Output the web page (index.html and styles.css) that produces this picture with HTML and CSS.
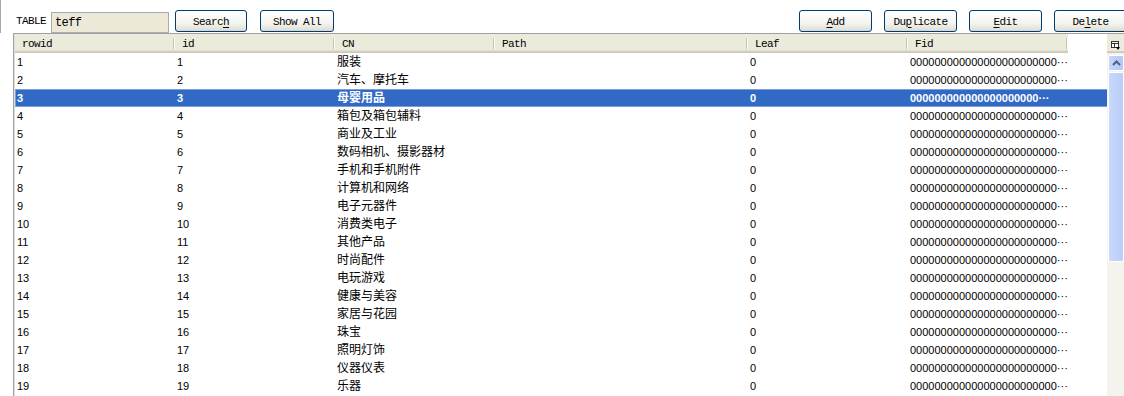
FILE: index.html
```html
<!DOCTYPE html>
<html lang="zh-CN">
<head>
  <meta charset="UTF-8">
  <title>TABLE teff</title>
  <link rel="stylesheet" href="styles.css">
</head>
<body>

  <!-- Toolbar -->
  <div class="toolbar">
    <span class="label">TABLE</span>
    <input class="table-name" type="text" value="teff">
    <button class="btn btn-search">Searc<u>h</u></button>
    <button class="btn btn-showall">Show All</button>
    <div class="spacer"></div>
    <div class="btn-group">
      <button class="btn"><u>A</u>dd</button>
      <button class="btn">Du<u>p</u>licate</button>
      <button class="btn"><u>E</u>dit</button>
      <button class="btn">De<u>l</u>ete</button>
    </div>
  </div>

  <!-- Grid -->
  <div class="grid">
    <div class="grid-body">
      <table class="data">
        <colgroup>
          <col style="width:160px">
          <col style="width:160px">
          <col style="width:160px">
          <col style="width:253px">
          <col style="width:160px">
          <col style="width:160px">
          <col>
        </colgroup>
        <thead>
          <tr>
            <th>rowid</th>
            <th>id</th>
            <th>CN</th>
            <th>Path</th>
            <th>Leaf</th>
            <th>Fid</th>
            <th class="blank"></th>
          </tr>
        </thead>
        <tbody id="rows"></tbody>
      </table>
    </div>

    <div class="vscroll">
      <div class="chooser">
        <svg width="9" height="9" viewBox="0 0 9 9">
          <rect x="0.5" y="0.5" width="7" height="6" fill="#fff" stroke="#333"/>
          <line x1="0.5" y1="2.5" x2="7.5" y2="2.5" stroke="#333"/>
          <line x1="3.5" y1="2.5" x2="3.5" y2="6.5" stroke="#333"/>
          <path d="M5 6 L9 6 L7 9 Z" fill="#000"/>
        </svg>
      </div>
      <div class="scroll-track">
        <div class="arrow-up">
          <svg width="9" height="6" viewBox="0 0 9 6">
            <path d="M1 5 L4.5 1.5 L8 5" fill="none" stroke="#4d6185" stroke-width="2"/>
          </svg>
        </div>
        <div class="thumb"></div>
      </div>
    </div>
  </div>

  <script>
    const names = [
      "服装", "汽车、摩托车", "母婴用品", "箱包及箱包辅料", "商业及工业",
      "数码相机、摄影器材", "手机和手机附件", "计算机和网络", "电子元器件",
      "消费类电子", "其他产品", "时尚配件", "电玩游戏", "健康与美容",
      "家居与花园", "珠宝", "照明灯饰", "仪器仪表", "乐器"
    ];
    const selected = 3;

    document.getElementById("rows").innerHTML = names
      .map((cn, i) => {
        const n = i + 1;
        const isSel = n === selected;
        const fid = "0".repeat(isSel ? 21 : 24) + "···";
        return `
        <tr class="${isSel ? "selected" : ""}">
          <td>${n}</td>
          <td>${n}</td>
          <td class="cn">${cn}</td>
          <td></td>
          <td>0</td>
          <td>${fid}</td>
          <td class="blank"></td>
        </tr>`;
      })
      .join("");
  </script>

</body>
</html>
```

FILE: styles.css
```css
/* General Reset */
* {
  margin: 0;
  padding: 0;
  box-sizing: border-box;
}

body {
  font-family: 'Liberation Sans', 'Noto Sans CJK SC', sans-serif;
  background-color: #fff;
  color: #000;
  width: 1124px;
  height: 396px;
  overflow: hidden;
}

/* Toolbar */
.toolbar {
  height: 33px;
  display: flex;
  align-items: flex-start;
  border-left: 1px solid #a7a6aa;
  padding-left: 15px;
}

.label,
.btn,
.data th {
  font-family: 'Liberation Mono', 'Noto Sans CJK SC', monospace;
  font-size: 11px;
  letter-spacing: -0.6px;
}

.label {
  margin-top: 15px;
  line-height: 12px;
}

.table-name {
  margin: 12px 0 0 5px;
  width: 118px;
  height: 21px;
  border: 1px solid #a5acb2;
  background-color: #ece9d8;
  padding: 0 3px;
  font-family: 'Liberation Mono', monospace;
  font-size: 12px;
  letter-spacing: -0.6px;
  color: #000;
}

.btn {
  margin-top: 10px;
  width: 73px;
  height: 22px;
  border: 1px solid #003c74;
  border-radius: 3px;
  background: linear-gradient(#ffffff, #f4f4f0 60%, #e3e1d8 92%, #d6d0c5);
  color: #000;
  padding-top: 1px;
}

.btn u {
  text-decoration-thickness: 1px;
  text-underline-offset: 2px;
}

.btn-search {
  margin-left: 6px;
  width: 72px;
}

.btn-showall {
  margin-left: 13px;
  width: 74px;
}

.spacer {
  flex: 1;
}

.btn-group {
  display: flex;
  gap: 12px;
  margin-right: -3px;
  flex-shrink: 0;
}

/* Grid */
.grid {
  display: flex;
  margin-left: 13px;
  border-left: 1px solid #a0a0a0;
  border-top: 1px solid #a0a0a0;
  height: 363px;
}

.grid-body {
  width: 1097px;
  border-left: 1px solid #e2e0d6;
  overflow: hidden;
}

.data {
  border-collapse: collapse;
  table-layout: fixed;
  width: 1096px;
}

.data th {
  height: 19px;
  text-align: left;
  font-weight: normal;
  padding: 1px 0 0 7px;
  color: #000;
  background:
    linear-gradient(#c7c5b2, #c7c5b2) no-repeat right 1px top 4px / 1px 11px,
    linear-gradient(#fff, #fff) no-repeat right 0 top 4px / 1px 11px,
    #ebeadb;
  box-shadow: inset 0 -1px #cbc7b8, inset 0 -2px #d6d2c2, inset 0 -3px #e2decd;
}

.data th.blank {
  background: #fff;
  box-shadow: none;
}

.data td {
  height: 18px;
  padding: 1px 0 0 2px;
  font-size: 11px;
  line-height: 17px;
  white-space: nowrap;
  overflow: hidden;
}

.data td.cn {
  font-size: 12px;
}

.data tr.selected td {
  background-color: #316ac5;
  color: #fff;
  font-weight: bold;
  box-shadow: inset 0 1px #7d9fd8, inset 0 -1px #7d9fd8;
}

.data tr.selected td:first-child {
  box-shadow: inset 0 1px #7d9fd8, inset 0 -1px #7d9fd8, inset 1px 0 #7d9fd8;
}

.data tr.selected td.blank {
  box-shadow: inset 0 1px #7d9fd8, inset 0 -1px #7d9fd8, inset -1px 0 #7d9fd8;
}

/* Vertical scrollbar */
.vscroll {
  width: 17px;
  display: flex;
  flex-direction: column;
}

.chooser {
  height: 19px;
  background-color: #ebeadb;
  box-shadow: inset 0 -1px #cbc7b8, inset 0 -2px #d6d2c2;
  padding: 7px 0 0 4px;
}

.chooser svg {
  display: block;
}

.scroll-track {
  flex: 1;
  background-color: #f4f3ee;
  padding: 2px 0 0 1px;
  display: flex;
  flex-direction: column;
}

.arrow-up {
  height: 16px;
  border: 1px solid #fff;
  border-radius: 2px;
  background: linear-gradient(90deg, #c6d5fc, #b4c8f6);
  display: flex;
  justify-content: center;
  align-items: center;
}

.thumb {
  height: 190px;
  margin-top: 1px;
  border: 1px solid #fff;
  border-radius: 2px;
  background: linear-gradient(90deg, #c9d8fc, #bacdf7);
}
```
